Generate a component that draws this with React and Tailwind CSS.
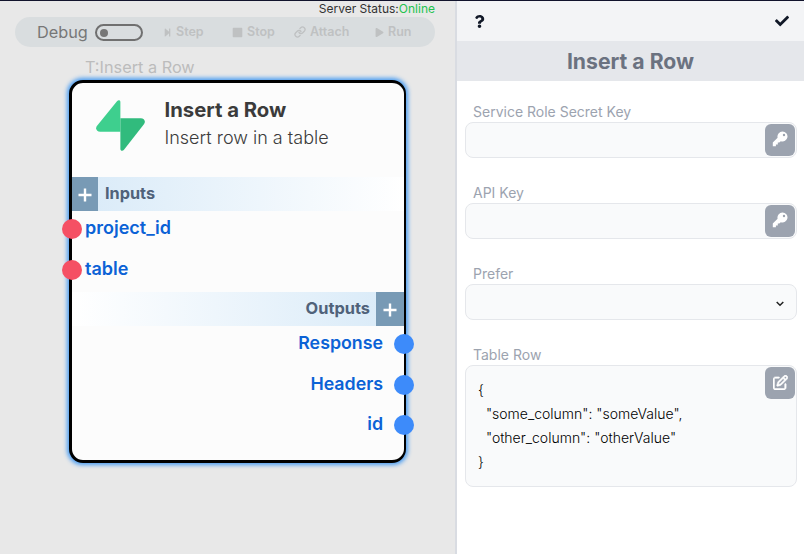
import React from "react";
import { FaStepForward, FaStop, FaPlay, FaCheck, FaQuestion } from "react-icons/fa";
import { FaRegPenToSquare } from "react-icons/fa6";
import { FiLink } from "react-icons/fi";

function Tool({ icon: Icon, label, className, size = 10, iconClass = "" }) {
  return (
    <span className={"flex h-full items-center text-[12.5px] font-semibold text-[#bfc1c2] " + className}>
      <Icon size={size} className={iconClass} />
      <span className="ml-1 pt-px">{label}</span>
    </span>
  );
}

function Toolbar() {
  return (
    <div className="ml-[15px] mt-px flex h-[30px] w-[420px] items-center rounded-[15px] bg-[#d9dddf]">
      <span className="w-[65px] pl-[22px] text-[16.300px] text-[#777777]">Debug</span>
      <span className="ml-[15px] mt-px flex h-[17px] w-12 items-center rounded-full border-2 border-[#707070] pl-[3px]">
        <span className="size-2 rounded-full bg-[#777777]" />
      </span>
      <Tool icon={FaStepForward} label="Step" size={9} className="ml-[20px] w-[69px]" />
      <Tool icon={FaStop} label="Stop" size={11} className="w-[62px]" />
      <Tool icon={FiLink} label="Attach" size={12} iconClass="stroke-[2.6]" className="w-[81px]" />
      <Tool icon={FaPlay} label="Run" size={9} className="" />
    </div>
  );
}

function Bolt() {
  return (
    <svg className="ml-[24px] mt-[17px] h-[51px] w-[49px] shrink-0" viewBox="0 0 49 51">
      <path d="M21 1.2C22.4-.5 24.4 0 24.4 2v29.7H4.2C.8 31.700-1 28.600.9 26Z" fill="#3ecf8e" />
      <path d="M28 49.800c-1.400 1.700-3.600 1.200-3.600-.8V18.300h20.400c3.400 0 5.200 3.100 3.300 5.700Z" fill="#31bb7d" />
    </svg>
  );
}

function KeyIcon({ size }) {
  return (
    <svg width={size} height={size} viewBox="0 0 16 16" fill="currentColor">
      <path
        fillRule="evenodd"
        d="M10.500 .5a5 5 0 0 0-4.900 6.200L.8 11.500V15.300h3.100v-1.800h1.900v-1.900h1.500l1.500-1.400A5 5 0 1 0 10.500.5ZM12 5.200a1.200 1.200 0 1 1 0-2.400 1.200 1.200 0 0 1 0 2.400Z"
      />
    </svg>
  );
}

function Plus({ className }) {
  return (
    <span className={"flex h-[34px] shrink-0 items-center justify-center bg-[#789ab5] " + className}>
      <svg viewBox="0 0 14 14" className="mt-[2px] size-[14px]" stroke="#fff" strokeWidth="2.4">
        <path d="M7 .5v13M.5 7h13" />
      </svg>
    </span>
  );
}

function Input({ name }) {
  return (
    <div className="-ml-[10px] flex h-[40.500px] items-center">
      <span className="mt-[2px] size-5 rounded-full bg-[#f55064]" />
      <span className="ml-[3px] text-[18px] leading-6 font-semibold text-[#0b62d6]">{name}</span>
    </div>
  );
}

function Output({ name }) {
  return (
    <div className="-mr-[10px] flex h-[40.500px] items-center justify-end">
      <span className="mr-[11px] text-[17.800px] leading-6 font-semibold text-[#0b62d6]">{name}</span>
      <span className="mt-[2px] size-5 rounded-full bg-[#3d8bfa]" />
    </div>
  );
}

function Node() {
  return (
    <div className="ml-[69px] mt-[3px] h-[383px] w-[337px] rounded-[14px] border-[3px] border-r-2 border-black bg-[#fcfcfc] shadow-[0_0_4px_1.500px_#4a9df2]">
      <div className="flex h-[94px]">
        <Bolt />
        <div className="ml-[19.500px] pt-[13px] text-[#3b3b3b]">
          <div className="text-[20.300px] leading-7 font-bold">Insert a Row</div>
          <div className="text-[18px] leading-7 font-light">Insert row in a table</div>
        </div>
      </div>
      <div className="flex h-[34px] bg-linear-to-r from-[#d8eaf8] to-white">
        <Plus className="w-[26px]" />
        <span className="ml-[7px] text-[16.300px] leading-8 font-bold text-[#50627a]">Inputs</span>
      </div>
      <div className="flow-root h-[81px]">
        <div className="-mt-[3px]">
          <Input name="project_id" />
          <Input name="table" />
        </div>
      </div>
      <div className="flex h-[34px] justify-end bg-linear-to-l from-[#d8eaf8] to-white">
        <span className="mr-[6px] text-[16.400px] leading-8 font-bold text-[#50627a]">Outputs</span>
        <Plus className="w-[28px]" />
      </div>
      <div className="-mt-[3px]">
        <Output name="Response" />
        <Output name="Headers" />
        <Output name="id" />
      </div>
    </div>
  );
}

function Field({ label, children, className = "h-9", action }) {
  return (
    <div className="mb-[25px]">
      <div className="h-5 pl-2 text-[14px] leading-5 text-[#9ca3af]">{label}</div>
      <div className={"flex justify-between rounded-lg border border-[#e5e7eb] bg-[#f9fafb] " + className}>
        <div className="pl-3 pt-3">{children}</div>
        {action}
      </div>
    </div>
  );
}

function Action({ icon: Icon, size, iconClass = "" }) {
  return (
    <button className="mr-px mt-px flex h-8 w-[30px] items-center justify-center rounded-md bg-[#9ca3af] pb-[2px] text-white">
      <Icon size={size} className={iconClass} />
    </button>
  );
}

export default function App() {
  return (
    <div className="flex h-[554px] w-[804px] overflow-hidden border-t border-[#11132c] bg-white font-['Inter',sans-serif]">
      <main className="w-[455px] shrink-0 bg-[#e8e8e8]">
        <div className="h-[15px] pr-[20px] text-right text-[12px] leading-[15px] text-[#333]">
          Server Status:<span className="text-[#22c34e]">Online</span>
        </div>
        <Toolbar />
        <div className="mt-[10px] h-[20px] pl-[85px] text-[16.300px] leading-5 text-[#bcbcbc]">T:Insert a Row</div>
        <Node />
      </main>
      <aside className="flex-1 border-l-2 border-[#d9dce2]">
        <header className="flex h-10 items-center justify-between bg-[#f3f4f6] pl-4 pr-[15px] text-[#111827]">
          <FaQuestion size={13} />
          <FaCheck size={14} />
        </header>
        <h1 className="h-10 bg-[#e5e7eb] text-center text-[21.200px] leading-10 font-bold text-[#6b7280]">Insert a Row</h1>
        <div className="pl-[8px] pr-[7px] pt-[21px]">
          <Field label="Service Role Secret Key" action={<Action icon={KeyIcon} size={16} />} />
          <Field label="API Key" action={<Action icon={KeyIcon} size={16} />} />
          <Field
            label="Prefer"
            action={
              <svg viewBox="0 0 8 6" className="mr-3 mt-4 h-[6px] w-2" fill="none" stroke="#222" strokeWidth="1.5">
                <path d="M.7 1 4 4.300 7.300 1" />
              </svg>
            }
          />
          <Field
            label="Table Row"
            className="h-[122px]"
            action={<Action icon={FaRegPenToSquare} size={15} iconClass="stroke-white stroke-[20]" />}
          >
            <pre className="font-['Inter',sans-serif] text-[14px] leading-6 font-light text-black">{`{
  "some_column": "someValue",
  "other_column": "otherValue"
}`}</pre>
          </Field>
        </div>
      </aside>
    </div>
  );
}
